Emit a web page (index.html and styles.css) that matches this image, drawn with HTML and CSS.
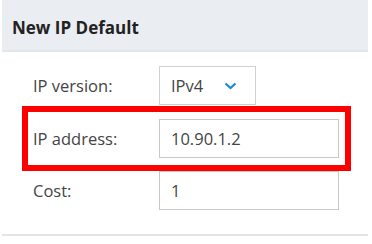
FILE: index.html
```html
<!DOCTYPE html>
<html lang="en">

<head>
    <meta charset="UTF-8">
    <meta name="viewport" content="width=device-width, initial-scale=1.0">
    <title>New IP Default</title>
    <link rel="stylesheet" href="styles.css">
</head>

<body>
    <div class="panel">
        <div class="panel-header">
            <h3>New IP Default</h3>
        </div>
        <div class="panel-body">
            <div class="form-row">
                <label for="ipVersion">IP version:</label>
                <div class="select-box" id="ipVersion">
                    <span>IPv4</span>
                    <svg class="chevron" width="13" height="8" viewBox="0 0 13 8">
                        <path d="M1.5 1.5 L6.5 6 L11.5 1.5" fill="none" stroke="#1e88d6" stroke-width="2.2" />
                    </svg>
                </div>
            </div>
            <!-- highlighted row -->
            <div class="form-row highlight">
                <label for="ipAddress">IP address:</label>
                <input type="text" id="ipAddress" value="10.90.1.2">
            </div>
            <div class="form-row">
                <label for="cost">Cost:</label>
                <input type="text" id="cost" value="1">
            </div>
        </div>
    </div>
</body>

</html>
```

FILE: styles.css
```css
body {
    font-family: 'Open Sans', 'Segoe UI', sans-serif;
    margin: 0;
    background-color: #fff;
}

.panel {
    margin: 0 4px 0 2px;
    border-bottom: 2px solid #e4e4e4;
}

.panel-header {
    height: 46px;
    display: flex;
    align-items: center;
    padding: 4px 10px 0;
    background-color: #eaedf2;
    border-bottom: 2px solid #e4e6ea;
}

.panel-header h3 {
    margin: 0;
    font-size: 17px;
    font-weight: bold;
    color: #222;
}

.panel-body {
    padding: 14px 17px 24px 20px;
}

.form-row {
    display: grid;
    grid-template-columns: 126px auto;
    align-items: center;
    padding: 0 11px;
}

.form-row label {
    font-size: 16.5px;
    color: #444;
}

.form-row input[type="text"] {
    width: 180px;
    height: 39px;
    box-sizing: border-box;
    padding: 0 11px;
    border: 1px solid #c8c8c8;
    font-family: inherit;
    font-size: 16.5px;
    color: #444;
    outline: none;
}

.select-box {
    width: 97px;
    height: 39px;
    box-sizing: border-box;
    display: flex;
    align-items: center;
    gap: 21px;
    padding: 0 11px;
    border: 1px solid #d0d0d0;
    font-size: 16.5px;
    color: #444;
}

.highlight {
    margin-top: 1px;
    padding: 7px 5px;
    border: 6px solid #ff0000;
}
```
